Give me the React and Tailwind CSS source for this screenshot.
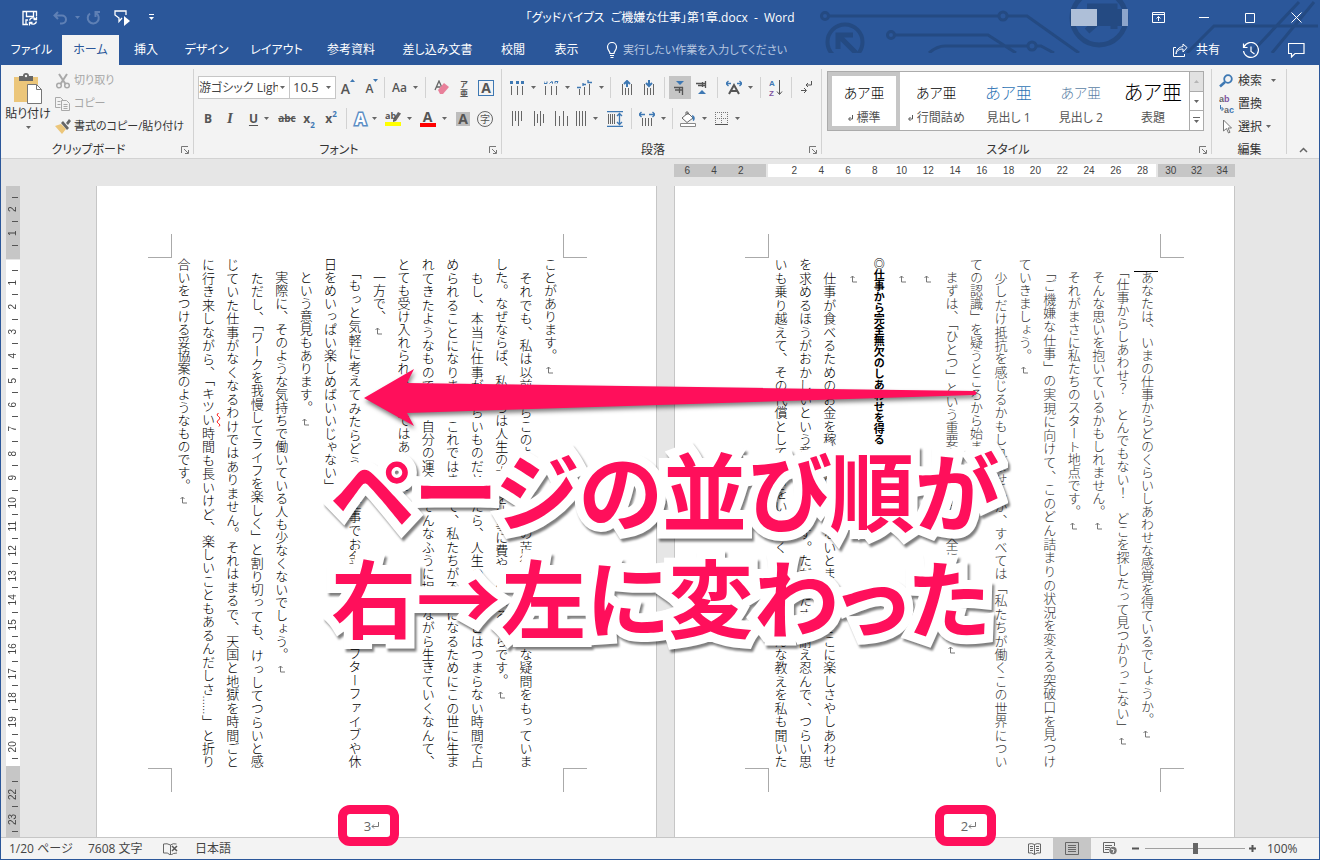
import React, { useState } from 'react';
import clsx from 'clsx';

const tabs = [
  { label: 'ファイル', width: 'w-[61px]' },
  { label: 'ホーム', width: 'w-[57px]' },
  { label: '挿入', width: 'w-[54px]' },
  { label: 'デザイン', width: 'w-[67px]' },
  { label: 'レイアウト', width: 'w-[73px]' },
  { label: '参考資料', width: 'w-[76px]' },
  { label: '差し込み文書', width: 'w-[97px]' },
  { label: '校閲', width: 'w-[54px]' },
  { label: '表示', width: 'w-[53px]' },
];

const styles = [
  { label: '標準', mark: true, sample: 'text-sm text-black' },
  { label: '行間詰め', mark: true, sample: 'text-sm text-black' },
  { label: '見出し 1', sample: 'text-base text-[#2e74b5]' },
  { label: '見出し 2', sample: 'text-sm text-[#5b7fa6]' },
  { label: '表題', sample: 'text-xl text-black' },
];

// one entry per vertical line, right to left
const leftPage = [
  { text: 'ことがあります。', end: true },
  { text: '　それでも、私は以前からこのような考え方の苦行主義には大きな疑問をもっていま', full: true },
  { text: 'した。なぜならば、私たちは人生の大半を仕事に費やしているからです。', end: true },
  { text: '　もし、本当に仕事がつらいものだとしたら、人生のほとんどはつまらない時間で占', full: true },
  { text: 'められることになります。これではまるで、私たちが不幸になるためにこの世に生ま', full: true },
  { text: 'れてきたようなものです。自分の運命をそんなふうに捉えながら生きていくなんて、', full: true },
  { text: 'とても受け入れられるものではありません。', end: true },
  { text: '　一方で、', end: true },
  { text: '　「もっと気軽に考えてみたらどうだ。仕事でお金を稼いで、アフターファイブや休', full: true },
  { text: '日をめいっぱい楽しめばいいじゃない」', end: true },
  { text: '　という意見もあります。', end: true },
  { text: '　実際に、そのような気持ちで働いている人も少なくないでしょう。', end: true },
  { text: '　ただし、「ワークを我慢してライフを楽しく」と割り切っても、けっしてつらいと感', full: true },
  { text: 'じていた仕事がなくなるわけではありません。それはまるで、天国と地獄を時間ごと', full: true },
  { text: 'に行き来しながら、「キツ', typo: 'い', rest: '時間も長いけど、楽しいこともあるんだしさ……」と折り', full: true },
  { text: '合いをつける妥協案のようなものです。', end: true },
];

const rightPage = [
  { text: '　あなたは、いまの仕事からどのくらいしあわせな感覚を得ているでしょうか。', end: true, light: true },
  { text: '　「仕事からしあわせ？　とんでもない！　どこを探したって見つかりっこない」', end: true, light: true },
  { text: '　そんな思いを抱いているかもしれません。', end: true, light: true },
  { text: '　それがまさに私たちのスタート地点です。', end: true, light: true },
  { text: '　「ご機嫌な仕事」の実現に向けて、このどん詰まりの状況を変える突破口を見つけ', full: true, light: true },
  { text: 'ていきましょう。', end: true, light: true },
  { text: '　少しだけ抵抗を感じるかもしれませんが、すべては「私たちが働くこの世界につい', full: true, light: true },
  { text: 'ての認識」を疑うところから始まります。', end: true, light: true },
  { text: '　まずは、「ひとつ」という重要な前提を先に完全に見直します。', end: true, light: true },
  { text: '　', end: true },
  { text: '　', end: true },
  { text: '◎仕事から完全無欠のしあわせを得る', heading: true },
  { text: '　', end: true },
  { text: '　仕事が食べるためのお金を稼ぐためでしかないとまでは、そこに楽しさやしあわせ', full: true },
  { text: 'を求めるほうがおかしいという意見もあります。ただひたすら耐え忍んで、つらい思', full: true },
  { text: 'いも乗り越えて、その代償として給料をいただくのが仕事、そんな教えを私も聞いた', full: true },
];

const Svg = ({ w = 16, h = 16, children, className }) => (
  <svg width={w} height={h} viewBox={`0 0 ${w} ${h}`} fill="none" className={clsx('shrink-0', className)} aria-hidden="true">
    {children}
  </svg>
);

const Caret = ({ className }) => (
  <Svg w={5} h={3} className={className}>
    <path d="M0 0h5L2.5 3z" fill="#666" />
  </Svg>
);

const Sep = ({ className }) => <span className={clsx('h-[21px] w-px shrink-0 bg-[#d2d2d2]', className)} />;

const Tool = ({ label, className, caret, active, children }) => (
  <button
    type="button"
    aria-label={label}
    className={clsx('flex h-[23px] shrink-0 items-center justify-center', caret && 'gap-[6px]', active && 'bg-[#c5c5c5]', className)}
  >
    {children}
    {caret && <Caret />}
  </button>
);

const Launcher = () => (
  <button type="button" aria-label="ダイアログを表示" className="absolute bottom-1 right-[5px]">
    <Svg w={8} h={8}>
      <path d="M.5 7V.5H7M3 3l4 4M7.5 4v3.5H4" stroke="#777" />
    </Svg>
  </button>
);

const Group = ({ title, className, launcher, children }) => (
  <section className={clsx('relative flex flex-col', className)}>
    <div className="min-h-0 flex-1">{children}</div>
    <h2 className={clsx('h-[17px] text-center text-xs leading-[18px] text-[#333]', launcher && 'pr-[18px]')}>{title}</h2>
    {launcher && <Launcher />}
    <span className="absolute bottom-1 right-0 top-1 w-px bg-[#d2d2d2]" />
  </section>
);

const TitleArt = () => (
  <svg width="500" height="53" viewBox="820 0 500 53" fill="none" stroke="#244a82" strokeWidth="3" className="absolute right-0 top-0" aria-hidden="true">
    <circle cx="826" cy="16" r="3.5" />
    <path d="M830 16H1000M1008 16h20l52 37" />
    <circle cx="1004" cy="16" r="4" />
    <circle cx="846" cy="42" r="17.5" strokeWidth="4" />
    <path d="M857 53l-17-17M839 49V35h15" strokeWidth="5" />
    <circle cx="892" cy="35" r="3.5" />
    <path d="M896 35h93l28 18M930 53q8-7 16-7h83M1038 46h4l13 7" />
    <circle cx="1033" cy="46" r="4" />
    <circle cx="1100" cy="18" r="27" strokeWidth="5" />
    <path d="M1088 7h27v22M1115 7l-27 24" strokeWidth="7" />
    <path d="M1319 26h-104l-27 27M1300 2l-48 51M1315 2l-42 51" />
  </svg>
);

const TitleBar = () => (
  <div className="relative flex h-[35px] items-center">
    <div className="flex flex-1 items-center">
      <button type="button" aria-label="上書き保存" className="ml-[21px]">
        <Svg>
          <path d="M6 14.500H1V1.500h13.500V6M4.500 2v4.500h7V2M4 14v-4h2" stroke="#fff" strokeWidth="1.300" />
          <path d="M7.500 10.500a3.500 3.500 0 0 1 6-1.500M14.500 11.500a3.500 3.500 0 0 1-6 1.500M14.500 6.500V9.500h-3M7.500 15.500v-3h3" stroke="#fff" strokeWidth="1.300" />
        </Svg>
      </button>
      <button type="button" aria-label="元に戻す" className="ml-[15px] flex items-center gap-[7px]">
        <Svg w={15}>
          <path d="M5 2L1.500 5.500 5 9M2 5.500h7a4 4 0 0 1 0 8H7" stroke="#5f80b5" strokeWidth="2" />
        </Svg>
        <Svg w={5} h={3}>
          <path d="M0 0h5L2.500 3z" fill="#5f80b5" />
        </Svg>
      </button>
      <button type="button" aria-label="やり直し" className="ml-[6px]">
        <Svg>
          <path d="M10 3.200A5.500 5.500 0 1 1 4 3.500M9.500 7V2H14" stroke="#5f80b5" strokeWidth="2" />
        </Svg>
      </button>
      <button type="button" aria-label="読み上げ" className="ml-3">
        <Svg w={17}>
          <path d="M8 8L5 11.500V8L1 5V1h11v4" stroke="#fff" strokeWidth="1.300" />
          <path d="M10 6v10l6-5z" fill="#fff" />
        </Svg>
      </button>
      <button type="button" aria-label="クイックアクセスのカスタマイズ" className="ml-[18px]">
        <Svg w={5} h={7}>
          <path d="M0 .5h5" stroke="#fff" />
          <path d="M0 3h5L2.500 6z" fill="#fff" />
        </Svg>
      </button>
    </div>
    <h1 className="whitespace-pre text-xs text-white">「グッドバイブス  ご機嫌な仕事」第1章.docx  -  Word</h1>
    <div className="flex flex-1 items-center justify-end">
      <div className="flex h-[17px]">
        <span className="w-[26px] bg-[#aebfd8]" />
        <span className="w-[25px] bg-[#244a82]" />
        <span className="w-[6px] bg-[#8da5cb]" />
      </div>
      <button type="button" aria-label="リボンの表示オプション" className="ml-[13px] flex w-[35px] justify-center">
        <Svg w={13} h={11}>
          <path d="M.5.5h12v10H.5zM.5 2.500h12M6.500 9V4.500M4.500 6.500l2-2 2 2" stroke="#fff" />
        </Svg>
      </button>
      <button type="button" aria-label="最小化" className="ml-1 flex w-[47px] justify-center">
        <Svg w={10} h={11}>
          <path d="M0 5.500h10" stroke="#fff" />
        </Svg>
      </button>
      <button type="button" aria-label="最大化" className="flex w-[46px] justify-center">
        <Svg w={10} h={10}>
          <path d="M.5.5h9v9h-9z" stroke="#fff" />
        </Svg>
      </button>
      <button type="button" aria-label="閉じる" className="flex w-[46px] justify-center">
        <Svg w={11} h={11}>
          <path d="M.5.5l10 10M10.500.5l-10 10" stroke="#fff" />
        </Svg>
      </button>
    </div>
  </div>
);

const TabBar = ({ active, onSelect }) => (
  <nav className="relative flex h-[30px] text-xs text-white">
    {tabs.map((tab) => (
      <button
        key={tab.label}
        type="button"
        onClick={() => onSelect(tab.label)}
        className={clsx('whitespace-nowrap', tab.width, active === tab.label && 'bg-[#f3f3f3] text-[#2b579a]')}
      >
        {tab.label}
      </button>
    ))}
    <label className="ml-[13px] flex items-center gap-[5px]">
      <Svg w={12} h={16}>
        <path d="M4 11.500C4 9 1.500 8.500 1.500 5a4.500 4.500 0 0 1 9 0C10.500 8.500 8 9 8 11.500zM4 13.500h4M4.500 15.500h3" stroke="#fff" strokeWidth="1.200" />
      </Svg>
      <input
        aria-label="操作アシスト"
        placeholder="実行したい作業を入力してください"
        className="w-[200px] bg-transparent text-[11px] outline-none placeholder:text-[#b9c8e0]"
      />
    </label>
    <div className="flex flex-1 items-center justify-end pr-[14px]">
      <button type="button" className="flex items-center gap-2">
        <Svg>
          <path d="M4 5.500H1.500v9h11V12M4 12c1-4 4-5 7-5v3l4-4.500L11 2v2.500C7 5 4 8 4 12z" stroke="#fff" />
        </Svg>
        共有
      </button>
      <button type="button" aria-label="履歴" className="ml-[22px]">
        <Svg w={17} h={17}>
          <path d="M2 5a7.500 7.500 0 1 1-.5 4M1.500 1.500v4h4M9 4.500v5l3.500 2.500" stroke="#fff" strokeWidth="1.200" />
        </Svg>
      </button>
      <button type="button" aria-label="コメント" className="ml-[29px]">
        <Svg w={17}>
          <path d="M.5 1.500h15.500v10H7l-3.500 3.500v-3.500h-3z" stroke="#fff" strokeWidth="1.200" />
        </Svg>
      </button>
    </div>
  </nav>
);

const ClipboardGroup = () => (
  <Group title="クリップボード" className="w-[193px]" launcher>
    <div className="flex">
      <button type="button" className="flex w-[54px] flex-col items-center pt-2 text-xs leading-4 text-[#333]">
        <Svg w={28} h={32}>
          <path d="M0 4h24v25H0z" fill="#ecc67a" />
          <path d="M5 3h4a3 3 0 0 1 6 0h4v5H5z" fill="#666" />
          <circle cx="12" cy="3" r="1.200" fill="#f3f3f3" />
          <path d="M13.500 11.500h9l5 5v14h-14z" fill="#fff" stroke="#777" />
          <path d="M22.500 11.500v5h5" stroke="#777" />
        </Svg>
        <span className="whitespace-nowrap pt-px">貼り付け</span>
        <Caret className="mt-1" />
      </button>
      <div className="flex flex-col pt-1 text-[11px] text-[#333]">
        <button type="button" className="flex h-[23px] items-center gap-[3px] text-[#a6a6a6]">
          <Svg>
            <path d="M4 1l6.500 10M12 1L5.500 11" stroke="#a9a9a9" strokeWidth="2" />
            <circle cx="4" cy="12.500" r="2.300" stroke="#a9a9a9" strokeWidth="1.500" />
            <circle cx="12" cy="12.500" r="2.300" stroke="#a9a9a9" strokeWidth="1.500" />
          </Svg>
          切り取り
        </button>
        <button type="button" className="flex h-[23px] items-center gap-[3px] text-[#a6a6a6]">
          <Svg>
            <path d="M5.500 11.500h-5V1.500h5l3 3M2.500 5.500h3M2.500 8.500h3" stroke="#a9a9a9" />
            <path d="M6.500 4.500h5l3 3v7h-8zM8.500 8.500h4M8.500 10.500h4M8.500 12.500h4" stroke="#a9a9a9" />
          </Svg>
          コピー
        </button>
        <button type="button" className="flex h-[23px] items-center gap-[3px] whitespace-nowrap">
          <Svg>
            <path d="M0 7l6-2 5 5-4 5z" fill="#ecc67a" />
            <path d="M6 4l2-2 6 7-2 2zM11 4l3-4 2 2-3 4z" fill="#666" />
          </Svg>
          書式のコピー/貼り付け
        </button>
      </div>
    </div>
  </Group>
);

const FontGroup = () => (
  <Group title="フォント" className="w-[308px]" launcher>
    <div className="pl-1 pt-[11px] text-[#555]">
      <div className="flex items-center">
        <div className="relative flex h-[23px] w-[92px] items-center border border-[#c6c6c6] bg-white">
          <select aria-label="フォント名" className="w-[79px] appearance-none overflow-hidden whitespace-nowrap text-[12px] text-[#444]">
            <option>游ゴシック Ligh</option>
          </select>
          <Caret className="absolute right-1" />
        </div>
        <div className="relative -ml-px flex h-[23px] w-[47px] items-center border border-[#c6c6c6] bg-white">
          <select aria-label="フォント サイズ" className="w-full appearance-none pl-[3px] text-[13px] text-[#444]">
            <option>10.5</option>
          </select>
          <Caret className="absolute right-1" />
        </div>
        <Tool label="フォントの拡大" className="w-6 items-end! text-sm font-semibold leading-5">
          A
          <Svg w={5} h={3} className="mb-[17px]">
            <path d="M0 3h5L2.500 0z" fill="#3e78b3" />
          </Svg>
        </Tool>
        <Tool label="フォントの縮小" className="w-6 items-end! text-xs font-semibold leading-5">
          A
          <Svg w={5} h={3} className="mb-[17px]">
            <path d="M0 0h5L2.500 3z" fill="#3e78b3" />
          </Svg>
        </Tool>
        <Sep />
        <Tool label="文字種の変換" caret className="w-10 text-xs font-semibold">Aa</Tool>
        <Sep className="mr-1" />
        <Tool label="書式のクリア" className="w-6">
          <Svg>
            <path d="M1 10L5 1l4 9M2.500 7h4" stroke="#666" strokeWidth="1.300" />
            <path d="M4 10l6-7 5 4-6 7H6z" fill="#e8809a" />
          </Svg>
        </Tool>
        <Tool label="ルビ" className="w-5 flex-col text-[8px] font-bold leading-[9px]">
          <span>ア</span>
          <span>亜</span>
        </Tool>
        <Tool label="囲み線" className="w-6">
          <span className="flex h-4 w-4 items-center justify-center border border-[#3e78b3] text-sm font-bold leading-none">A</span>
        </Tool>
      </div>
      <div className="mt-2 flex items-center text-xs font-bold">
        <Tool label="太字" className="w-5">B</Tool>
        <Tool label="斜体" className="w-6">
          <i className="font-['Liberation_Serif',serif] text-[15px]">I</i>
        </Tool>
        <Tool label="下線" caret className="w-[34px]">
          <u className="underline-offset-2">U</u>
        </Tool>
        <Tool label="取り消し線" className="w-[22px] text-[10px]">
          <s>abc</s>
        </Tool>
        <Tool label="下付き" className="w-[22px]">
          x<span className="self-end text-[8px] leading-[10px] text-[#3e78b3]">2</span>
        </Tool>
        <Tool label="上付き" className="w-[22px]">
          x<span className="self-start text-[8px] leading-[14px] text-[#3e78b3]">2</span>
        </Tool>
        <Sep className="mx-1" />
        <Tool label="文字の効果" caret className="w-[30px]">
          <span className="text-base leading-none text-white [paint-order:stroke_fill] [-webkit-text-stroke:3px_#5b8dc4]">A</span>
        </Tool>
        <Tool label="蛍光ペン" caret className="w-[34px]">
          <Svg h={17}>
            <path d="M8 10l5-8 3 1.500-5 7.500-3 1z" fill="#666" />
            <path d="M0 12h16v4H0z" fill="#ff0" />
            <text x="0" y="9" fontSize="9" fontWeight="700" fill="#555">ab</text>
          </Svg>
        </Tool>
        <Tool label="フォントの色" caret className="w-9">
          <span className="w-4 border-b-4 border-[#f00] text-center text-sm leading-[13px]">A</span>
        </Tool>
        <Tool label="網かけ" className="w-6">
          <span className="h-[14px] w-[14px] bg-[#bdbdbd] text-center text-sm leading-[14px]">A</span>
        </Tool>
        <Tool label="囲い文字" className="w-5">
          <span className="h-4 w-4 shrink-0 rounded-full border border-[#666] text-center text-[10px] font-normal leading-[14px]">字</span>
        </Tool>
      </div>
    </div>
  </Group>
);

const ParagraphGroup = () => (
  <Group title="段落" className="w-80" launcher>
    <div className="pl-1 pt-[11px]">
      <div className="flex items-center">
        <Tool label="箇条書き" caret className="w-[34px]">
          <Svg w={15} h={14}>
            <path d="M1.500 5v9M7.500 5v9M12.500 5v9" stroke="#666" />
            <path d="M0 0h3v3H0zM6 0h3v3H6zM11 0h3v3h-3z" fill="#3e78b3" />
          </Svg>
        </Tool>
        <Tool label="段落番号" caret className="w-[34px]">
          <Svg w={15} h={14}>
            <path d="M1.500 5v9M7.500 5v9M12.500 5v9" stroke="#666" />
            <path d="M0 .5v2h3v-2M5.500 2.500l2-2 1 2v-2M11 2.500v-2h3l-1 2" stroke="#3e78b3" />
          </Svg>
        </Tool>
        <Tool label="アウトライン" caret className="w-8">
          <Svg>
            <path d="M2.500 9v6M7.500 7v8M12.500 4v11" stroke="#666" />
            <path d="M0 7.500h4M6 4.500h3M6 3v3M11 0v2.500h4" stroke="#3e78b3" strokeWidth="1.300" />
          </Svg>
        </Tool>
        <Sep className="ml-1 mr-[5px]" />
        <Tool label="インデントを減らす" className="w-[22px]">
          <Svg w={12}>
            <path d="M1.500 4v11M4.500 8v7M7.500 8v7M10.500 4v11" stroke="#666" />
            <path d="M6 7V1M3 4l3-3 3 3" stroke="#3e78b3" strokeWidth="2" />
          </Svg>
        </Tool>
        <Tool label="インデントを増やす" className="w-[22px]">
          <Svg w={12}>
            <path d="M1.500 4v11M4.500 8v7M7.500 8v7M10.500 4v11" stroke="#666" />
            <path d="M6 0v6M3 3l3 3 3-3" stroke="#3e78b3" strokeWidth="2" />
          </Svg>
        </Tool>
        <Sep className="mx-1" />
        <Tool label="左から右" active className="w-[22px]">
          <Svg w={12} h={14}>
            <path d="M2 0h8L6 4z" fill="#3e78b3" />
            <path d="M0 6.500h9M1 9h8M8.500 6v8M5.500 6v6" stroke="#555" strokeWidth="1.300" />
          </Svg>
        </Tool>
        <Tool label="右から左" className="w-[22px]">
          <Svg w={12} h={14}>
            <path d="M2 13h8L6 9z" fill="#3e78b3" />
            <path d="M0 2.500h10M2 4.500h7M9.500 0v7M6.500 1v5" stroke="#555" strokeWidth="1.300" />
          </Svg>
        </Tool>
        <Sep className="mx-1" />
        <Tool label="拡張書式" caret className="w-[34px]">
          <Svg>
            <path d="M3 14l5-9 5 9M5 11h6" stroke="#555" strokeWidth="2" />
            <path d="M0 3.500h5M2.500 1L0 3.500 2.500 6M16 3.500h-5M13.500 1L16 3.500 13.500 6" stroke="#3e78b3" strokeWidth="1.300" />
          </Svg>
        </Tool>
        <Sep className="mx-1" />
        <Tool label="並べ替え" className="w-[22px]">
          <Svg w={14} h={20}>
            <g className="font-['Liberation_Sans',sans-serif]" fontSize="8" fontWeight="700">
              <text x="0" y="8" fill="#3e78b3">A</text>
              <text x="0" y="18" fill="#8054a0">Z</text>
            </g>
            <path d="M10.500 2v14M8 13.500l2.500 3 2.500-3" stroke="#555" />
          </Svg>
        </Tool>
        <Sep className="mx-1" />
        <Tool label="編集記号の表示" className="w-[22px]">
          <Svg w={12} h={14}>
            <path d="M10.500 0v4H5M7 2L5 4l2 2M0 9.500h5M3 7l2.500 2.500L3 12" stroke="#555" />
          </Svg>
        </Tool>
      </div>
      <div className="mt-2 flex items-center">
        <Tool label="上揃え" className="w-[22px]">
          <Svg w={11} h={15}>
            <path d="M.5 0v15M3.500 0v10M6.500 0v15M9.500 0v10" stroke="#666" />
          </Svg>
        </Tool>
        <Tool label="上下中央揃え" className="w-[22px]">
          <Svg w={11} h={15}>
            <path d="M.5 0v15M3.500 3v9M6.500 0v15M9.500 3v9" stroke="#666" />
          </Svg>
        </Tool>
        <Tool label="下揃え" className="w-[22px]">
          <Svg w={13} h={15}>
            <path d="M.5 0v15M4.500 5v10M8.500 0v15M12.500 5v10" stroke="#666" />
          </Svg>
        </Tool>
        <Tool label="両端揃え" caret className="w-[30px]">
          <Svg w={11} h={15}>
            <path d="M.5 0v15M3.500 0v15M6.500 0v15M9.500 0v15" stroke="#666" />
          </Svg>
        </Tool>
        <Tool label="均等割り付け" className="w-[26px]">
          <Svg>
            <path d="M0 .5h16M0 15.500h16M12.500 3v10M10 5l2.500-2.500L15 5M10 11l2.500 2.500L15 11" stroke="#3e78b3" strokeWidth="1.300" />
            <path d="M1.500 3v10M3.500 3v10M5.500 3v10M7.500 3v10" stroke="#666" />
          </Svg>
        </Tool>
        <Sep className="mx-[3px]" />
        <Tool label="行間" caret className="w-[34px]">
          <Svg>
            <path d="M3.500 7v8M6.500 7v8M9.500 7v8M12.500 7v8" stroke="#666" />
            <path d="M0 3.500h6M2.500 1L0 3.500 2.500 6M16 3.500h-6M13.500 1L16 3.500 13.500 6" stroke="#3e78b3" strokeWidth="1.300" />
          </Svg>
        </Tool>
        <Sep className="mx-[3px]" />
        <Tool label="塗りつぶし" caret className="w-[34px]">
          <Svg>
            <path d="M2 7l6-5 5 5-6 4.500zM6 4V1h2v3" fill="#fff" stroke="#666" />
            <path d="M12 4c4 1 3 6 1 6z" fill="#3e78b3" />
            <path d="M.5 12.500h15v3H.5z" fill="#fff" stroke="#888" />
          </Svg>
        </Tool>
        <Tool label="罫線" caret className="w-[34px]">
          <Svg w={14} h={14}>
            <path d="M.5 0v13M6.500 0v13M12.500 0v13M0 .5h13M0 6.500h13" stroke="#777" strokeDasharray="1 1" />
            <path d="M0 12.500h13" stroke="#555" />
          </Svg>
        </Tool>
      </div>
    </div>
  </Group>
);

const StyleGroup = () => {
  const [current, setCurrent] = useState('標準');
  return (
    <Group title="スタイル" className="min-w-0 flex-1" launcher>
      <div className="ml-[5px] mr-2 mt-[6px] flex h-[60px] border border-[#ababab] bg-white">
        <div className="flex min-w-0 flex-1">
          {styles.map((s) => (
            <button
              key={s.label}
              type="button"
              onClick={() => setCurrent(s.label)}
              className={clsx('flex min-w-0 flex-1 flex-col items-center border-4', current === s.label ? 'border-[#c6c6c6]' : 'border-transparent')}
            >
              <span className={clsx('flex h-[34px] items-center whitespace-nowrap font-light', s.sample)}>あア亜</span>
              <span className="flex items-center gap-1 whitespace-nowrap text-xs leading-4 text-[#555]">
                {s.mark && (
                  <Svg w={5} h={6}>
                    <path d="M4.500 0v4H1M2.500 2L.5 4l2 2" stroke="#555" />
                  </Svg>
                )}
                {s.label}
              </span>
            </button>
          ))}
        </div>
        <div className="flex w-[14px] flex-col divide-y divide-[#ababab] border-l border-[#ababab]">
          <button type="button" aria-label="前の行" className="flex flex-1 items-center justify-center bg-[#e1e1e1]">
            <Svg w={5} h={3}>
              <path d="M0 3h5L2.500 0z" fill="#b5b5b5" />
            </Svg>
          </button>
          <button type="button" aria-label="次の行" className="flex flex-1 items-center justify-center">
            <Caret />
          </button>
          <button type="button" aria-label="その他" className="flex flex-1 items-center justify-center">
            <Svg w={7} h={7}>
              <path d="M0 .5h7" stroke="#666" />
              <path d="M1 3h5L3.500 6z" fill="#666" />
            </Svg>
          </button>
        </div>
      </div>
    </Group>
  );
};

const EditGroup = () => (
  <Group title="編集" className="w-[75px]">
    <div className="flex flex-col pl-[7px] pt-1 text-xs text-[#333]">
      <button type="button" className="flex h-[23px] items-center">
        <Svg w={15} h={14} className="mr-1">
          <circle cx="9" cy="5" r="3.800" stroke="#3e78b3" strokeWidth="1.800" />
          <path d="M6 8l-5 4.500" stroke="#3e78b3" strokeWidth="2.500" />
        </Svg>
        検索
        <Caret className="ml-[9px]" />
      </button>
      <button type="button" className="flex h-[23px] items-center">
        <Svg w={16} h={20} className="mr-[3px]">
          <g className="font-['Liberation_Sans',sans-serif]" fontSize="9" fontWeight="700" fill="#666">
            <text x="0" y="8">a<tspan fill="#8054a0">b</tspan></text>
            <text x="5" y="19">a<tspan fill="#3e78b3">c</tspan></text>
          </g>
          <path d="M1.500 11v4H4M2.500 13L4.500 15l-2 2" stroke="#3e78b3" />
        </Svg>
        置換
      </button>
      <button type="button" className="flex h-[23px] items-center">
        <Svg w={12} h={15} className="ml-[3px] mr-1">
          <path d="M1.500 1v11l3-2.500 2 4.500 1.500-.7-2-4.300H9.500z" fill="#fff" stroke="#777" />
        </Svg>
        選択
        <Caret className="ml-1" />
      </button>
    </div>
  </Group>
);

const ReturnMark = () => (
  <svg width="8" height="8" viewBox="0 0 8 8" fill="none" stroke="#777" className="mr-[6px] mt-1 inline-block align-middle" aria-hidden="true">
    <path d="M2.500 1v6H7M.5 3l2-2 2 2" />
  </svg>
);

const Line = ({ line }) => (
  <p
    className={clsx(
      'h-full min-w-0 flex-1 whitespace-nowrap leading-[26px] [writing-mode:vertical-rl]',
      line.full && '[text-align-last:justify]',
      line.heading ? 'text-[11px] font-bold' : 'text-[13px] font-light',
      line.light ? 'text-[#333]' : 'text-black'
    )}
  >
    {line.text}
    {line.typo && (
      <span className="underline decoration-[#f00] decoration-wavy decoration-1 [text-underline-position:right]">{line.typo}</span>
    )}
    {line.rest}
    {line.end && <ReturnMark />}
  </p>
);

const Page = ({ lines, number, className, caret }) => (
  <article className={clsx('w-[561px] border-x border-[#c6c6c6] bg-white pt-12', className)}>
    <div className="flex justify-between">
      <span className="h-6 w-6 border-b border-r border-[#aaa]" />
      <span className="h-6 w-6 border-b border-l border-[#aaa]" />
    </div>
    <div className="relative mx-6 flex h-[510px] flex-row-reverse">
      {caret && <span className="absolute right-[2px] top-[13px] h-px w-6 bg-black" />}
      {lines.map((line, i) => (
        <Line key={i} line={line} />
      ))}
    </div>
    <div className="flex justify-between">
      <span className="h-6 w-6 border-r border-t border-[#aaa]" />
      <span className="h-6 w-6 border-l border-t border-[#aaa]" />
    </div>
    <footer className="mt-[26px] flex items-center justify-center pl-2 text-[13px] leading-4 text-[#666]">
      {number}
      <Svg w={8} h={8}>
        <path d="M7.500 0v4.500H1M3 2.500l-2 2 2 2" stroke="#777" />
      </Svg>
    </footer>
  </article>
);

const RulerTick = () => <span className="ml-[6px] h-px w-[6px] shrink-0 bg-[#555]" />;

const RulerMark = ({ n }) => (
  <div className="flex min-h-0 flex-1 flex-col">
    <RulerTick />
    <span className="mx-auto flex-1 rotate-180 text-center leading-[14px] [writing-mode:vertical-rl]">{n}</span>
  </div>
);

const VerticalRuler = () => (
  <div className="ml-[5px] mt-[27px] flex w-[14px] shrink-0 flex-col font-['Liberation_Sans',sans-serif] text-[10px] text-[#444]">
    <div className="flex h-[73px] flex-col bg-[#c6c6c6] pb-[13px] pt-[11px]">
      <RulerMark n={2} />
      <RulerMark n={1} />
      <RulerTick />
    </div>
    <div className="mt-px flex h-[506px] flex-col bg-white pb-[7px] pt-[10px]">
      {Array.from({ length: 20 }, (_, i) => (
        <RulerMark key={i} n={i + 1} />
      ))}
      <RulerTick />
    </div>
    <div className="flex flex-1 flex-col bg-[#c6c6c6] pb-[5px] pt-[15px]">
      <RulerMark n={22} />
      <RulerMark n={23} />
      <RulerTick />
    </div>
  </div>
);

const HorizontalRuler = () => (
  <div className="flex h-[13px] w-[561px] gap-[2px] self-end font-['Liberation_Sans',sans-serif] text-[10px] leading-[13px] text-[#444]">
    <div className="flex w-[92px] bg-[#c6c6c6] pr-3 text-center">
      {[6, 4, 2].map((n) => (
        <span key={n} className="flex-1">{n}</span>
      ))}
    </div>
    <div className="flex flex-1 bg-white pl-[13px] text-center">
      {Array.from({ length: 14 }, (_, i) => (
        <span key={i} className="min-w-0 flex-1">{(i + 1) * 2}</span>
      ))}
    </div>
    <div className="flex w-[77px] bg-[#c6c6c6] text-center">
      {[30, 32, 34].map((n) => (
        <span key={n} className="flex-1">{n}</span>
      ))}
    </div>
  </div>
);

const Callouts = () => (
  <>
    <span className="absolute left-[242px] top-[646px] z-10 h-[41px] w-[61px] rounded-xl border-[9px] border-[#ff0f5b]" />
    <span className="absolute left-[839px] top-[646px] z-10 h-[41px] w-[61px] rounded-xl border-[9px] border-[#ff0f5b]" />
    <svg
      width="620"
      height="64"
      viewBox="0 0 620 64"
      className="absolute left-[264px] top-[207px] drop-shadow-[1px_3px_2px_rgba(0,0,0,0.5)]"
      aria-hidden="true"
    >
      <path d="M4 32L54 3l-7 14 568 8q3 2 0 4L47 47l7 13z" fill="#ff0f5b" />
    </svg>
    <p className="absolute left-[235px] top-[280px] whitespace-nowrap text-[85px] font-bold leading-[107px] text-[#ff0f5b] [font-feature-settings:'palt'] [paint-order:stroke_fill] [stroke-linejoin:round] [-webkit-text-stroke:18px_white] drop-shadow-[2px_3px_1px_rgba(0,0,0,0.5)]">
      ページの並び順が
      <br />
      右→左に変わった
    </p>
  </>
);

const Workspace = () => (
  <main className="flex min-h-0 flex-1 bg-[#e6e6e6]">
    <VerticalRuler />
    <div className="flex min-w-0 flex-1 justify-center pr-2">
      <div className="relative flex flex-col pt-[5px]">
        <HorizontalRuler />
        <div className="mt-[9px] flex min-h-0 flex-1 gap-[17px]">
          <Page lines={leftPage} number={3} className="pl-[51px] pr-[69px]" />
          <Page lines={rightPage} number={2} className="pl-[70px] pr-[50px]" caret />
        </div>
        <Callouts />
      </div>
    </div>
  </main>
);

const StatusBar = () => {
  const [zoom, setZoom] = useState(100);
  return (
    <footer className="relative flex h-[22px] items-center border-t border-[#c6c6c6] bg-[#f3f3f3] pl-2 text-xs text-[#444]">
      <span className="w-[79px] whitespace-nowrap [font-feature-settings:'palt']">1/20 ページ</span>
      <span className="w-[75px]">7608 文字</span>
      <button type="button" aria-label="文章校正" className="w-8">
        <Svg w={15} h={12}>
          <path d="M7.500 2v10M7.500 2Q4 0 .5 1v9q4-1 7 2M7.500 2Q10 0 13.500 1M8 12q2-2 6-2" stroke="#666" />
          <path d="M9 3l5 5M14 3L9 8" stroke="#555" strokeWidth="1.500" />
        </Svg>
      </button>
      <span className="flex-1">日本語</span>
      <button type="button" aria-label="閲覧モード" className="flex h-full w-[38px] items-center justify-center">
        <Svg w={13} h={12}>
          <path d="M6.500 1.500v10M6.500 1.500Q4 0 .5 1v9q3-1 6 1.500Q9 9 12.500 10V1Q9 0 6.500 1.500M2 3.500h3M2 5.500h3M2 7.500h3M8 3.500h3M8 5.500h3M8 7.500h3" stroke="#666" />
        </Svg>
      </button>
      <button type="button" aria-label="印刷レイアウト" className="flex h-full w-[38px] items-center justify-center bg-[#c6c6c6]">
        <Svg w={14} h={13}>
          <path d="M.5.5h13v12H.5zM3 3.500h8M3 5.500h8M3 7.500h8M3 9.500h8" stroke="#666" />
        </Svg>
      </button>
      <button type="button" aria-label="Web レイアウト" className="flex h-full w-[38px] items-center justify-center">
        <Svg w={14} h={13}>
          <path d="M6 10.500H.5V.5h11V4M2 3.500h7M2 5.500h5M2 7.500h4" stroke="#666" />
          <circle cx="10" cy="8.500" r="3.700" fill="#777" />
          <path d="M8 7l3 1-1 3" stroke="#f3f3f3" />
        </Svg>
      </button>
      <button type="button" aria-label="縮小" className="ml-[3px] mr-[6px]">
        <Svg w={7} h={7}>
          <path d="M0 3.500h7" stroke="#555" strokeWidth="2" />
        </Svg>
      </button>
      <input
        type="range"
        aria-label="ズーム"
        min="0"
        max="200"
        value={zoom}
        onChange={(e) => setZoom(Number(e.target.value))}
        className="h-px w-[100px] appearance-none bg-[#a0a0a0] [&::-webkit-slider-thumb]:h-[11px] [&::-webkit-slider-thumb]:w-[5px] [&::-webkit-slider-thumb]:appearance-none [&::-webkit-slider-thumb]:bg-[#666]"
      />
      <button type="button" aria-label="拡大" className="ml-1">
        <Svg w={7} h={7}>
          <path d="M0 3.500h7M3.500 0v7" stroke="#555" strokeWidth="2" />
        </Svg>
      </button>
      <span className="ml-[11px] w-[52px]">{zoom}%</span>
    </footer>
  );
};

export default function App() {
  const [tab, setTab] = useState('ホーム');

  return (
    <div
      lang="ja"
      className="flex h-screen flex-col overflow-hidden border-x border-b border-[#2b579a] bg-[#e6e6e6] font-['Open_Sans','Noto_Sans_CJK_JP',sans-serif]"
    >
      <header className="relative bg-[#2b579a] [font-feature-settings:'palt']">
        <TitleArt />
        <TitleBar />
        <TabBar active={tab} onSelect={setTab} />
      </header>
      <div className="flex h-[94px] border-b border-[#d2d2d2] bg-[#f3f3f3] [font-feature-settings:'palt']">
        <ClipboardGroup />
        <FontGroup />
        <ParagraphGroup />
        <StyleGroup />
        <EditGroup />
        <button type="button" aria-label="リボンを折りたたむ" className="flex w-8 items-end justify-center pb-[5px]">
          <Svg w={9} h={6}>
            <path d="M1 5l3.500-3.500L8 5" stroke="#666" strokeWidth="1.500" />
          </Svg>
        </button>
      </div>
      <Workspace />
      <StatusBar />
    </div>
  );
}
